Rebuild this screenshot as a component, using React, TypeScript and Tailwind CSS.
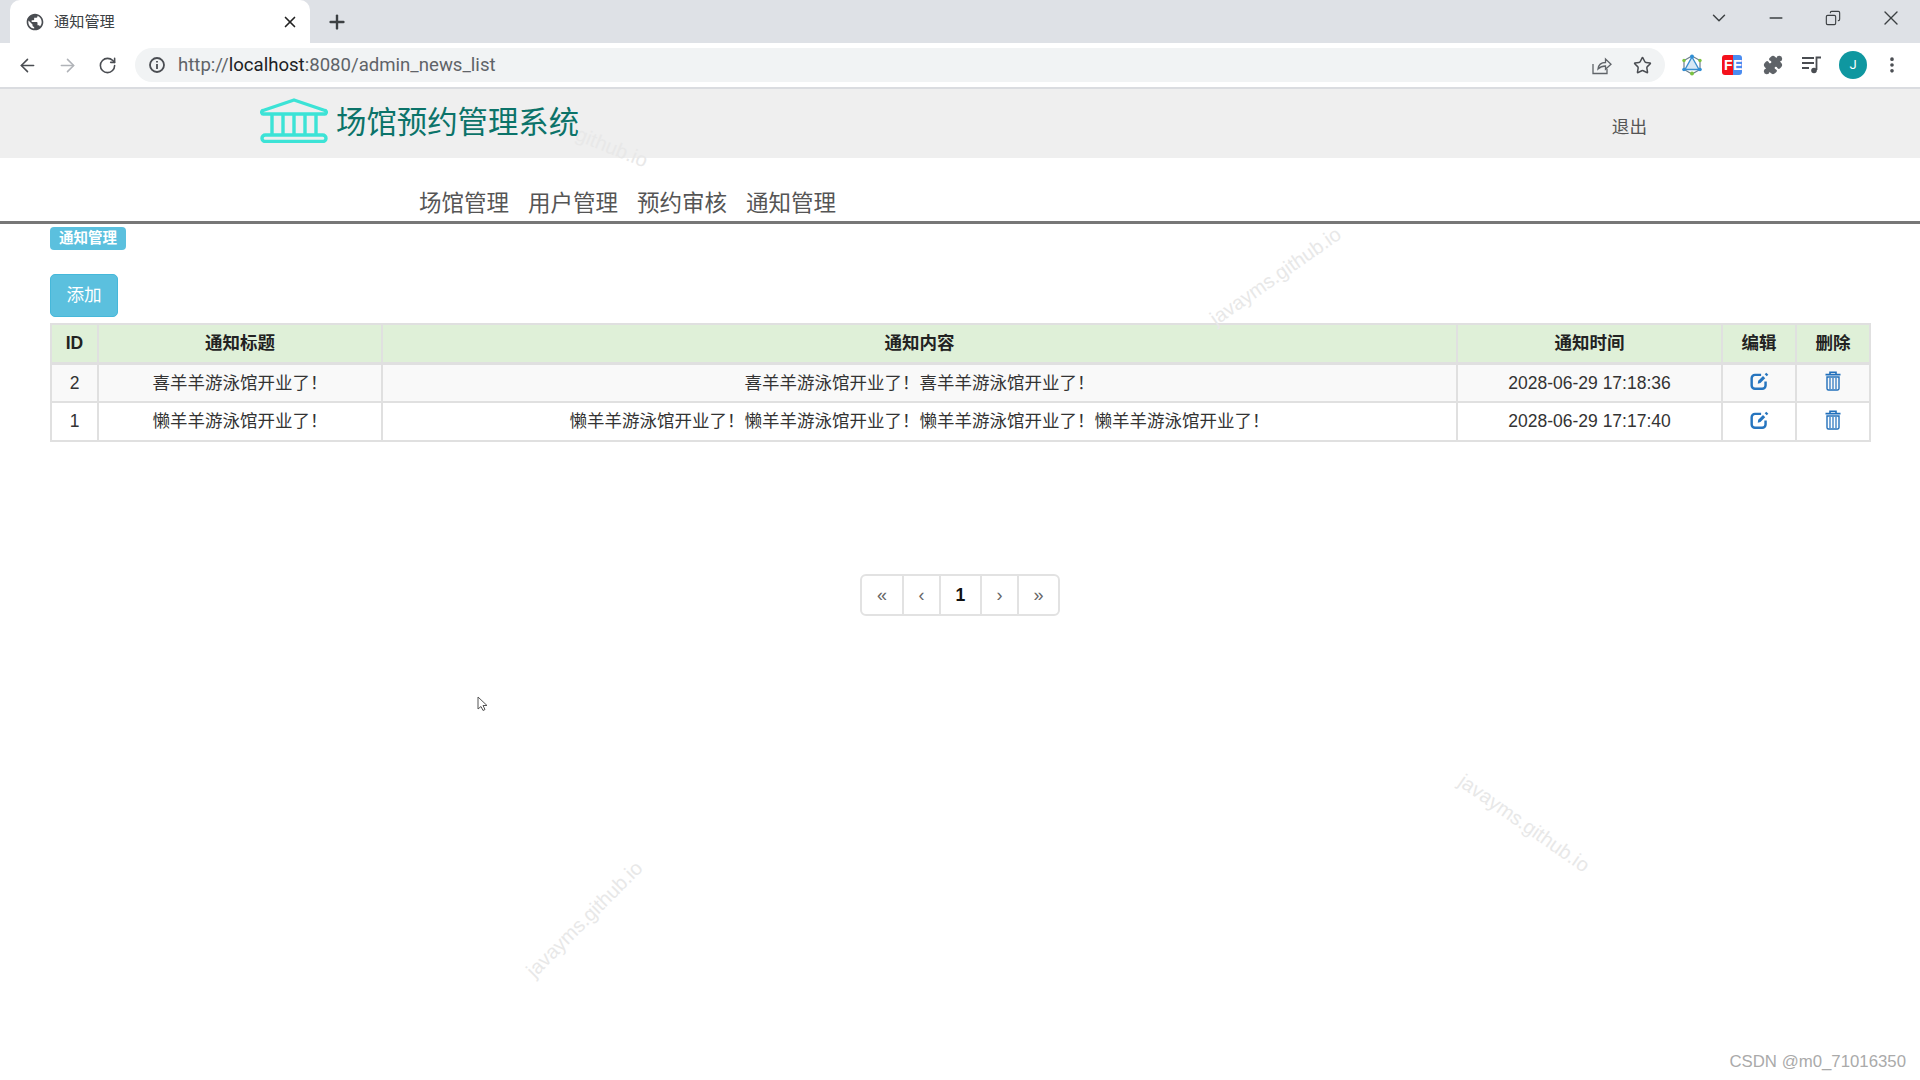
import { ArrowLeft, ArrowRight, ChevronDown, Copy, Minus, MoreVertical, Plus, Puzzle, RotateCw, Star, X } from "lucide-react";

const cjk = "font-['Liberation_Sans','Noto_Sans_CJK_SC',sans-serif]";

const rows = [
  { id: 2, title: "喜羊羊游泳馆开业了！", content: "喜羊羊游泳馆开业了！喜羊羊游泳馆开业了！", time: "2028-06-29 17:18:36" },
  { id: 1, title: "懒羊羊游泳馆开业了！", content: "懒羊羊游泳馆开业了！懒羊羊游泳馆开业了！懒羊羊游泳馆开业了！懒羊羊游泳馆开业了！", time: "2028-06-29 17:17:40" },
];

function GlobeIcon() {
  return (
    <svg width="20" height="20" viewBox="0 0 24 24" fill="#4a4d52">
      <path d="M12 2C6.48 2 2 6.48 2 12s4.48 10 10 10 10-4.48 10-10S17.52 2 12 2zm-1 17.93c-3.95-.49-7-3.85-7-7.93 0-.62.08-1.21.21-1.79L9 15v1c0 1.1.9 2 2 2v1.93zm6.9-2.54c-.26-.81-1-1.39-1.9-1.39h-1v-3c0-.55-.45-1-1-1H8v-2h2c.55 0 1-.45 1-1V7h2c1.1 0 2-.9 2-2v-.41c2.93 1.19 5 4.06 5 7.41 0 2.08-.8 3.97-2.1 5.39z" />
    </svg>
  );
}

function InfoIcon() {
  return (
    <svg width="18" height="18" viewBox="0 0 18 18" fill="none" stroke="#4a4d52" strokeWidth="1.8">
      <circle cx="9" cy="9" r="7" />
      <path d="M9 8v5M9 5v1.6" />
    </svg>
  );
}

function ShareIcon() {
  return (
    <svg width="20" height="20" viewBox="0 0 20 20" fill="none" stroke="#5f6368" strokeWidth="1.3">
      <path d="M1 9v9.5h14V14" />
      <path d="M6 14c.5-4 3.5-6.5 7.5-6.5V4l5.5 5.2-5.5 5V11C10.500 11 8 12 6 14z" />
    </svg>
  );
}

function GraphIcon() {
  return (
    <svg width="20" height="22" viewBox="0 0 20 22" fill="none">
      <path d="M10 2 18 6.500V15.500L10 20 2 15.500V6.500Z" stroke="#6b7f8c" strokeWidth="1.2" />
      <path d="M10 3 17 15.500H3Z" stroke="#3a8fd0" strokeWidth="1.4" fill="#d7e8f5" />
      <circle cx="10" cy="2.500" r="2" fill="#2f8fd6" />
      <circle cx="2" cy="6.500" r="1.700" fill="#7cc242" />
      <circle cx="18" cy="6.500" r="1.700" fill="#7cc242" />
      <circle cx="2" cy="15.500" r="1.800" fill="#2f8fd6" />
      <circle cx="18" cy="15.500" r="1.800" fill="#2f8fd6" />
      <circle cx="10" cy="19.500" r="2" fill="#7cc242" />
    </svg>
  );
}

function MediaIcon() {
  return (
    <svg width="21" height="20" viewBox="0 0 21 20" fill="none" stroke="#4a4d52" strokeWidth="1.8">
      <path d="M1 3h12M1 8h12M1 13h7" />
      <path d="M15.500 15V2.500H20" />
      <circle cx="13" cy="15.500" r="2.800" fill="#4a4d52" stroke="none" />
    </svg>
  );
}

function BankLogo() {
  return (
    <svg width="68" height="45" viewBox="0 0 68 45" fill="none" stroke="#3ce3d6" strokeWidth="3.4">
      <path d="M34 2 65 12.500a1.500 1.500 0 0 1-1 3.500H4a1.500 1.500 0 0 1-1-3.500Z" strokeLinejoin="round" />
      <path d="M12 16v22M23 16v22M34 16v22M45 16v22M56 16v22" />
      <rect x="2" y="37" width="64" height="6.500" rx="3.250" />
    </svg>
  );
}

function EditIcon() {
  return (
    <svg width="20" height="20" viewBox="0 0 18 18" fill="none" className="block">
      <path d="M14 9.500V13a3 3 0 0 1-3 3H4.500a3 3 0 0 1-3-3V6.500a3 3 0 0 1 3-3H10" stroke="#2675bf" strokeWidth="2.200" />
      <path d="M7 11.500 7.400 8.800l4.300-4.300 2 2-4.300 4.300Z" fill="#2675bf" />
      <path d="M14.700 1.500 16.500 3.300 15 4.800 13.200 3Z" fill="#2675bf" />
    </svg>
  );
}

function TrashIcon() {
  return (
    <svg width="16" height="20" viewBox="0 0 16 20" fill="none" stroke="#2270bb" strokeWidth="1.200" className="block">
      <path d="M5 3V1.200h6V3M.5 3.600h15" strokeWidth="1.600" />
      <path d="M2 6h12v11.500a1.500 1.500 0 0 1-1.500 1.500h-9A1.500 1.500 0 0 1 2 17.500Z" strokeWidth="1.400" />
      <path d="M5 7v11M8 7v11M11 7v11" />
    </svg>
  );
}

function Watermark({ className, text = "javayms.github.io" }: { className: string; text?: string }) {
  return (
    <span className={`pointer-events-none absolute whitespace-nowrap font-['Liberation_Sans',sans-serif] text-[20px] text-[#e8e8e8] ${className}`}>
      {text}
    </span>
  );
}

export default function App() {
  return (
    <div className={`relative flex h-[1080px] w-[1920px] flex-col overflow-hidden bg-white ${cjk}`}>
      {/* tab strip */}
      <div className="flex h-[43px] items-end bg-[#dee1e6] pl-[10px]">
        <div className="flex h-[43px] w-[300px] items-center rounded-t-[10px] bg-white pl-[15px] pr-[11px]">
          <GlobeIcon />
          <span className="ml-[9px] flex-1 pt-[1px] text-[15.200px] text-[#3c4043]">通知管理</span>
          <X size={18} color="#222" strokeWidth={2.2} />
        </div>
        <div className="ml-[16px] flex h-[43px] items-center">
          <Plus size={22} color="#3c4043" strokeWidth={2.6} />
        </div>
        <div className="ml-auto flex h-[36px] items-center self-start pr-[17px]">
          <ChevronDown size={22} color="#3c4043" strokeWidth={1.6} />
          <Minus size={20} color="#3c4043" strokeWidth={1.8} className="ml-[36px]" />
          <Copy size={16} color="#3c4043" strokeWidth={1.7} className="ml-[39px] -scale-x-100" />
          <X size={24} color="#3c4043" strokeWidth={1.4} className="ml-[38px]" />
        </div>
      </div>

      {/* address bar */}
      <div className="flex h-[46px] items-center border-b-2 border-[#dadce0] bg-white">
        <div className="flex w-[135px] items-center pl-[17px]">
          <ArrowLeft size={21} color="#4a4d52" strokeWidth={1.8} />
          <ArrowRight size={21} color="#b0b3b8" strokeWidth={1.8} className="ml-[19px]" />
          <RotateCw size={19} color="#4a4d52" strokeWidth={2} className="ml-[20px]" />
        </div>
        <div className="flex h-[34px] w-[1530px] items-center rounded-[17px] bg-[#f1f3f4] pl-[13px] pr-[13px]">
          <InfoIcon />
          <span className="ml-[12px] flex-1 pt-[1px] font-['Roboto',sans-serif] text-[18.600px] text-[#5f6368]">
            http://<span className="text-[#202124]">localhost</span>:8080/admin_news_list
          </span>
          <ShareIcon />
          <Star size={19} color="#4a4d52" strokeWidth={1.9} className="ml-[21px]" />
        </div>
        <div className="ml-[17px] flex items-center">
          <GraphIcon />
          <div className="ml-[20px] flex h-[20px] w-[20px] overflow-hidden rounded-[3px] font-['Liberation_Sans',sans-serif] text-[14px] font-bold leading-[20px] text-white">
            <span className="w-[11px] bg-[#f4111c] pl-[2px]">F</span>
            <span className="w-[9px] bg-[#4b8cf0]">E</span>
          </div>
          <Puzzle size={20} color="#5f6368" fill="#5f6368" className="ml-[21px]" />
          <span className="ml-[18px]"><MediaIcon /></span>
          <div className="ml-[17px] flex h-[28px] w-[28px] items-center justify-center rounded-full bg-[#0f97a0] font-['Roboto',sans-serif] text-[13px] text-white">J</div>
          <MoreVertical size={20} color="#4a4d52" strokeWidth={2.4} className="ml-[15px]" />
        </div>
      </div>

      {/* site header */}
      <header className="flex h-[69px] shrink-0 items-center justify-between bg-[#efefef] pl-[260px] pr-[273px]">
        <div className="flex items-center pb-[6px]">
          <BankLogo />
          <span className="ml-[8px] font-['Noto_Sans_CJK_SC',sans-serif] text-[30.400px] font-normal text-[#0b7369]">场馆预约管理系统</span>
        </div>
        <a className="pt-[8px] text-[17.600px] text-[#555]">退出</a>
      </header>

      {/* nav */}
      <nav className="flex h-[66px] shrink-0 items-end gap-[19px] border-b-[3px] border-[#777] pb-0 pl-[419px] text-[22.500px] text-[#555]">
        <a>场馆管理</a>
        <a>用户管理</a>
        <a>预约审核</a>
        <a>通知管理</a>
      </nav>

      <main className="px-[50px] pt-[3px]">
        <span className="block h-[23px] w-[76px] rounded-[4px] bg-[#5bc0de] text-center text-[14.500px] font-bold leading-[23px] text-white">通知管理</span>
        <button className="mt-[24px] block h-[43px] w-[68px] rounded-[5px] border border-[#46b8da] bg-[#5bc0de] text-[17.600px] text-white">添加</button>

        <table className="mt-[6px] w-[1819px] table-fixed border-collapse text-center text-[17.500px] text-[#333]">
          <colgroup>
            <col className="w-[47px]" />
            <col className="w-[284px]" />
            <col className="w-[1075px]" />
            <col className="w-[265px]" />
            <col className="w-[74px]" />
            <col className="w-[74px]" />
          </colgroup>
          <thead>
            <tr className="h-[39px] bg-[#dff0d8] font-bold text-[#222]">
              {["ID", "通知标题", "通知内容", "通知时间", "编辑", "删除"].map((h) => (
                <th key={h} className="border-x-2 border-t-2 border-b-[3px] border-[#e0e0e0] p-0 font-bold">{h}</th>
              ))}
            </tr>
          </thead>
          <tbody>
            {rows.map((r, i) => (
              <tr key={r.id} className={i === 0 ? "h-[39px] bg-[#f9f9f9]" : "h-[39px] bg-white"}>
                <td className="border-2 border-[#e0e0e0] p-0">{r.id}</td>
                <td className="border-2 border-[#e0e0e0] p-0">{r.title}</td>
                <td className="border-2 border-[#e0e0e0] p-0">{r.content}</td>
                <td className="border-2 border-[#e0e0e0] p-0">{r.time}</td>
                <td className="border-2 border-[#e0e0e0] p-0">
                  <span className="flex justify-center pb-[4px] pl-[2px]"><EditIcon /></span>
                </td>
                <td className="border-2 border-[#e0e0e0] p-0">
                  <span className="flex justify-center pb-[4px]"><TrashIcon /></span>
                </td>
              </tr>
            ))}
          </tbody>
        </table>

        <div className="mt-[132px] flex justify-center">
          <div className="flex h-[42px] overflow-hidden rounded-[6px] border-2 border-[#e2e2e2] text-[#666]">
            <span className="flex w-[40px] items-center justify-center text-[18px]">«</span>
            <span className="flex w-[37px] items-center justify-center border-l-2 border-[#e2e2e2] text-[18px]">‹</span>
            <span className="flex w-[41px] items-center justify-center border-l-2 border-[#e2e2e2] text-[17.600px] font-bold text-[#111]">1</span>
            <span className="flex w-[37px] items-center justify-center border-l-2 border-[#e2e2e2] text-[18px]">›</span>
            <span className="flex w-[41px] items-center justify-center border-l-2 border-[#e2e2e2] text-[18px]">»</span>
          </div>
        </div>
      </main>

      {/* watermarks and pointer sit over the page */}
      <Watermark className="left-[574px] top-[132px] rotate-[22deg]" text="github.io" />
      <Watermark className="left-[1198px] top-[261px] -rotate-[35deg]" />
      <Watermark className="left-[1447px] top-[808px] rotate-[35deg]" />
      <Watermark className="left-[507px] top-[904px] -rotate-[45deg]" />
      <svg width="11" height="16" viewBox="0 0 11 16" className="absolute left-[477px] top-[696px]" fill="#fff" stroke="#555" strokeWidth="1">
        <path d="M1 1v12l3-2.500 2 4 2-1-2-4h4Z" />
      </svg>
      <span className="absolute bottom-[6px] right-[14px] font-['Liberation_Sans',sans-serif] text-[16.800px] text-[#aaa]">CSDN @m0_71016350</span>
    </div>
  );
}
